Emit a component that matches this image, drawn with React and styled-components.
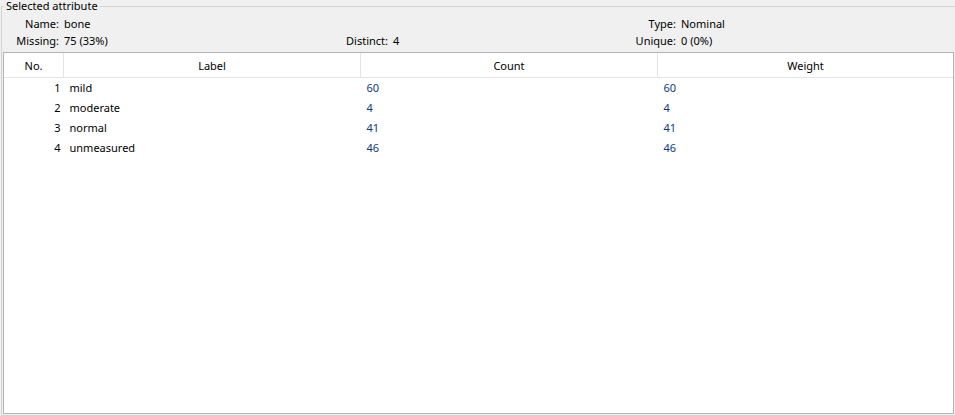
import React from 'react';
import styled, { createGlobalStyle } from 'styled-components';

const GlobalStyle = createGlobalStyle`
  html, body {
    margin: 0;
    padding: 0;
    background: #f0f0f0;
  }
  body {
    width: 955px;
    height: 416px;
    overflow: hidden;
    font-family: 'Segoe UI', 'Noto Sans', sans-serif;
    font-size: 11px;
    color: #000;
  }
`;

const Panel = styled.fieldset`
  box-sizing: border-box;
  width: 954px;
  height: 416px;
  margin: 0 0 0 1px;
  padding: 0 1px 1px 1px;
  border: 1px solid #d2d2d2;
  border-right: none;
  display: flex;
  flex-direction: column;
  min-width: 0;
`;

const Legend = styled.legend`
  padding: 0 2px;
  margin-left: 1px;
  font-size: 11px;
  line-height: 12px;
  color: #000;
`;

const InfoGrid = styled.div`
  display: grid;
  grid-template-columns: 56px 275px 44px 230px 48px 1fr;
  grid-auto-rows: 17px;
  column-gap: 5px;
  padding: 3px 0 3px 0;
  line-height: 17px;
`;

const InfoLabel = styled.div`
  text-align: right;
  white-space: nowrap;
  grid-column: ${p => p.col};
  grid-row: ${p => p.row};
`;

const InfoValue = styled.div`
  text-align: left;
  white-space: nowrap;
  grid-column: ${p => p.col};
  grid-row: ${p => p.row};
`;

const TableBox = styled.div`
  flex: 1;
  background: #fff;
  border: 1px solid #b4b4b4;
  overflow: hidden;
`;

const Table = styled.table`
  width: 100%;
  border-collapse: collapse;
  table-layout: fixed;
`;

const HeadCell = styled.th`
  height: 24px;
  padding: 0;
  font-weight: normal;
  text-align: center;
  border-bottom: 1px solid #e4e4e4;
  border-left: ${p => (p.first ? 'none' : '1px solid #e4e4e4')};
  width: ${p => p.width || 'auto'};
`;

const Cell = styled.td`
  height: 20px;
  padding: 0 ${p => (p.right ? '3px' : '0')} 0 ${p => (p.right ? '0' : '6px')};
  text-align: ${p => (p.right ? 'right' : 'left')};
  color: ${p => (p.num ? '#0b3b82' : '#000')};
  white-space: nowrap;
  line-height: 20px;
`;

const rows = [
  { no: 1, label: 'mild', count: 60, weight: 60 },
  { no: 2, label: 'moderate', count: 4, weight: 4 },
  { no: 3, label: 'normal', count: 41, weight: 41 },
  { no: 4, label: 'unmeasured', count: 46, weight: 46 },
];

const App = () => (
  <>
    <GlobalStyle />
    <Panel>
      <Legend>Selected attribute</Legend>
      <InfoGrid>
        <InfoLabel col={1} row={1}>Name:</InfoLabel>
        <InfoValue col={2} row={1}>bone</InfoValue>
        <InfoLabel col={1} row={2}>Missing:</InfoLabel>
        <InfoValue col={2} row={2}>75 (33%)</InfoValue>
        <InfoLabel col={3} row={2}>Distinct:</InfoLabel>
        <InfoValue col={4} row={2}>4</InfoValue>
        <InfoLabel col={5} row={1}>Type:</InfoLabel>
        <InfoValue col={6} row={1}>Nominal</InfoValue>
        <InfoLabel col={5} row={2}>Unique:</InfoLabel>
        <InfoValue col={6} row={2}>0 (0%)</InfoValue>
      </InfoGrid>
      <TableBox>
        <Table>
          <thead>
            <tr>
              <HeadCell first width="59px">No.</HeadCell>
              <HeadCell width="296px">Label</HeadCell>
              <HeadCell width="296px">Count</HeadCell>
              <HeadCell>Weight</HeadCell>
            </tr>
          </thead>
          <tbody>
            {rows.map(r => (
              <tr key={r.no}>
                <Cell right>{r.no}</Cell>
                <Cell>{r.label}</Cell>
                <Cell num>{r.count}</Cell>
                <Cell num>{r.weight}</Cell>
              </tr>
            ))}
          </tbody>
        </Table>
      </TableBox>
    </Panel>
  </>
);

export default App;
